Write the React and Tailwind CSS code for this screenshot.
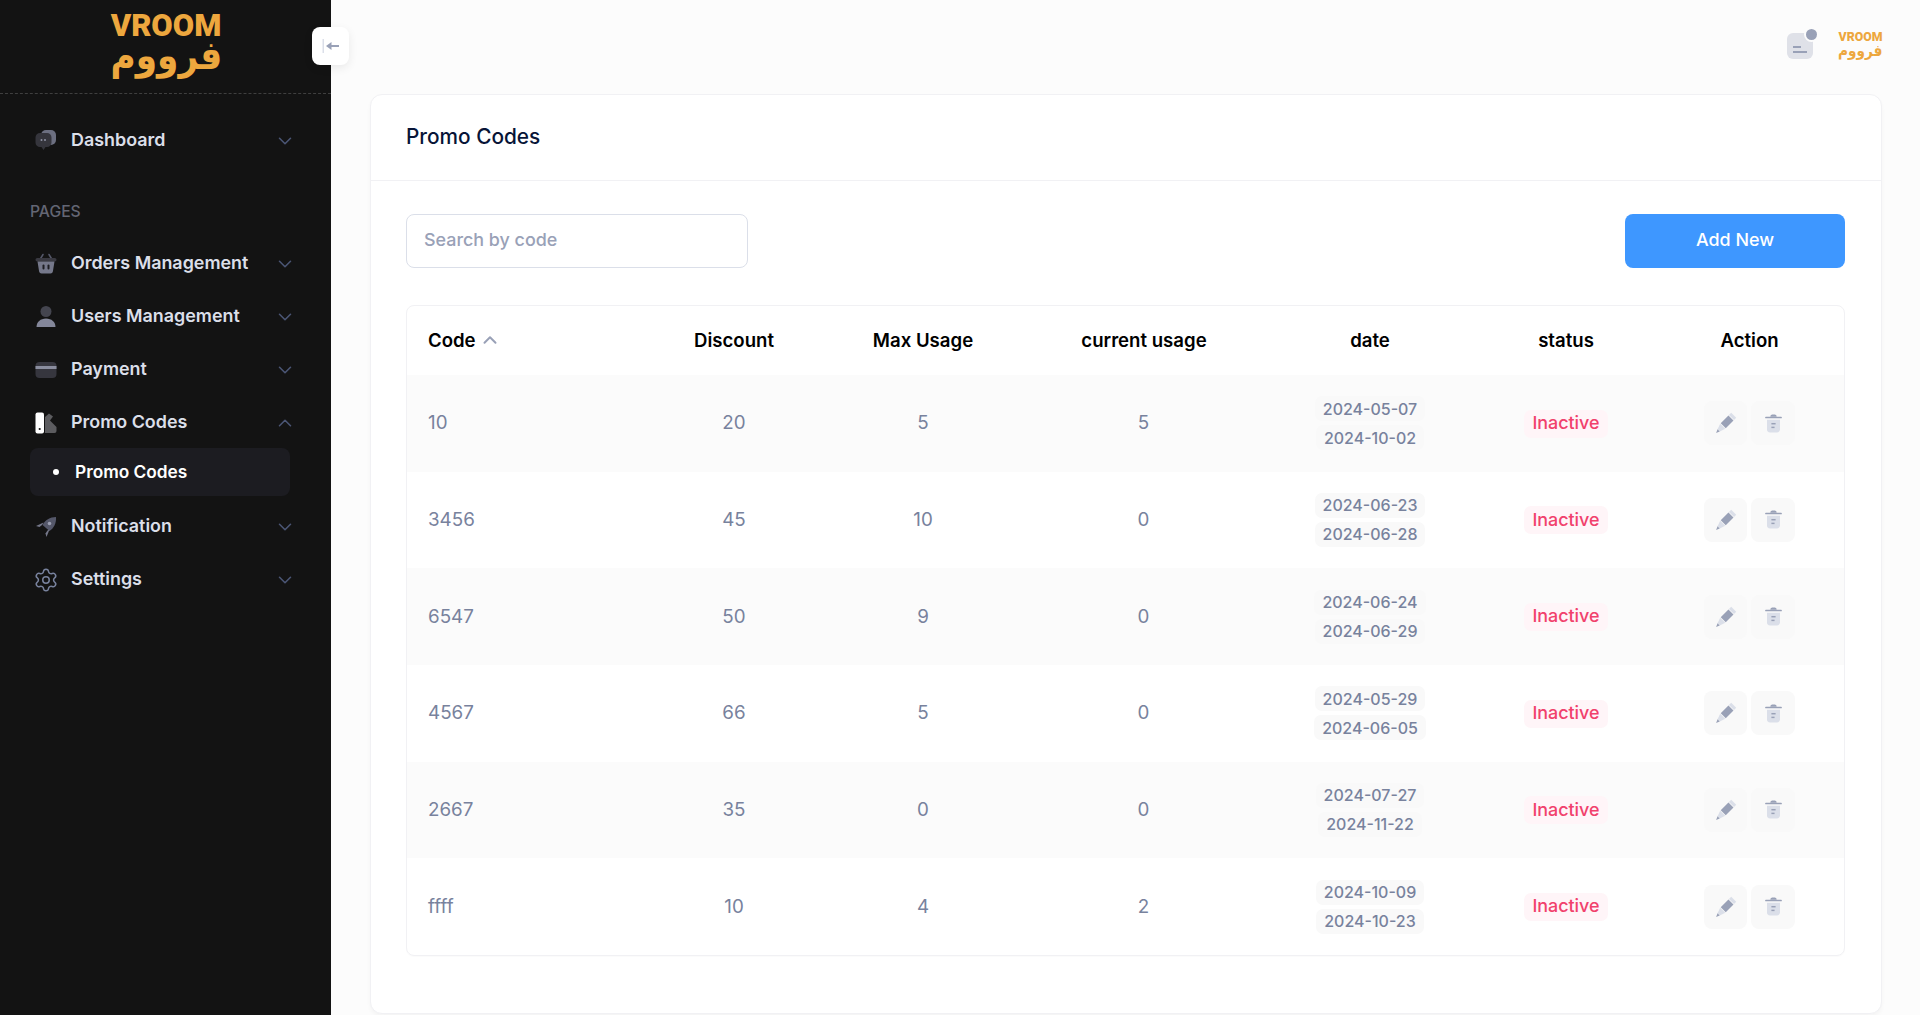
import { ChevronDown, ChevronUp, Settings } from 'lucide-react';

const rows = [
  { code: '10', discount: 20, max: 5, current: 5, from: '2024-05-07', to: '2024-10-02' },
  { code: '3456', discount: 45, max: 10, current: 0, from: '2024-06-23', to: '2024-06-28' },
  { code: '6547', discount: 50, max: 9, current: 0, from: '2024-06-24', to: '2024-06-29' },
  { code: '4567', discount: 66, max: 5, current: 0, from: '2024-05-29', to: '2024-06-05' },
  { code: '2667', discount: 35, max: 0, current: 0, from: '2024-07-27', to: '2024-11-22' },
  { code: 'ffff', discount: 10, max: 4, current: 2, from: '2024-10-09', to: '2024-10-23' },
];

function ChatIcon() {
  return (
    <svg viewBox="0 0 22 22" className="w-[22px] h-[22px]">
      <rect x="6" y="0" width="15" height="15" rx="5" fill="#6c6f80" />
      <path d="M5 3h7a4.500 4.500 0 0 1 4.500 4.500v5A4.500 4.500 0 0 1 12 17H10.500L8.500 20 6.500 17H5A4.500 4.500 0 0 1 .5 12.500v-5A4.500 4.500 0 0 1 5 3z" fill="#35353c" />
      <circle cx="6.500" cy="10" r="1" fill="#8f92a3" />
      <circle cx="10" cy="10" r="1" fill="#8f92a3" />
    </svg>
  );
}

function BasketIcon() {
  return (
    <svg viewBox="0 0 22 22" className="w-[22px] h-[22px]">
      <path d="M5 6.500 8 1.500M17 6.500 14 1.500" stroke="#55586a" strokeWidth="1.500" strokeLinecap="round" />
      <rect x="0.500" y="5" width="21" height="3.500" rx="1.750" fill="#3a3a42" />
      <path d="M2.500 8.500h17l-1.600 10a2.500 2.500 0 0 1-2.500 2H6.600a2.500 2.500 0 0 1-2.500-2z" fill="#75788a" />
      <rect x="7.500" y="11.500" width="2" height="5" rx="1" fill="#1d1d22" />
      <rect x="12.500" y="11.500" width="2" height="5" rx="1" fill="#1d1d22" />
    </svg>
  );
}

function UserIcon() {
  return (
    <svg viewBox="0 0 22 22" className="w-[22px] h-[22px]">
      <circle cx="11" cy="5.500" r="5.500" fill="#44454f" />
      <path d="M1.500 21c0-5 4-8.500 9.500-8.500s9.500 3.500 9.500 8.500z" fill="#84879a" />
    </svg>
  );
}

function CardIcon() {
  return (
    <svg viewBox="0 0 22 22" className="w-[22px] h-[22px]">
      <rect x="0.500" y="3" width="21" height="16" rx="4" fill="#36363e" />
      <rect x="0.500" y="7" width="21" height="3" fill="#8a8d9e" />
    </svg>
  );
}

function PromoIcon() {
  return (
    <svg viewBox="0 0 22 22" className="w-[22px] h-[22px]">
      <path d="M10 5 14 1.500l4 3-3 4L21.500 15v4a2 2 0 0 1-2 2H10z" fill="#5c5c5f" />
      <rect x="0.500" y="0.500" width="8.500" height="21" rx="2" fill="#ffffff" />
      <circle cx="4.700" cy="17" r="1.100" fill="#131313" />
    </svg>
  );
}

function RocketIcon() {
  return (
    <svg viewBox="0 0 22 22" className="w-[22px] h-[22px]">
      <path d="M21 1c.5 6-2 11-6.500 14L7.500 9C10 4 15 1 21 1z" fill="#55586a" />
      <circle cx="14.500" cy="7.500" r="1.800" fill="#9a9db0" />
      <path d="M8.500 6.500 1 10l3.500 1L7 9z" fill="#75788a" />
      <path d="M14.500 13.500 11.500 21l-1-3.500 2-3z" fill="#75788a" />
    </svg>
  );
}

function NavItem({ icon, label, open }) {
  return (
    <div className="h-[53px] flex items-center pl-[5px] cursor-pointer">
      <span className="w-[22px] h-[22px] flex items-center justify-center mr-[14px]">{icon}</span>
      <span className="flex-1 text-[17.900px] font-semibold text-[#dbdfe9]">{label}</span>
      {open
        ? <ChevronUp className="w-[22px] h-[22px] text-[#4b5675] mr-[-6px]" strokeWidth={1.700} />
        : <ChevronDown className="w-[22px] h-[22px] text-[#4b5675] mr-[-6px]" strokeWidth={1.700} />}
    </div>
  );
}

function Sidebar() {
  return (
    <aside className="relative w-[331px] shrink-0 bg-[#131313] h-screen">
      <div className="h-[94px] border-b border-dashed border-[#3f3f3f] flex flex-col items-center pl-[1px] pt-[12px]">
        <div className="text-[#eda73e] text-[31px] leading-[28px] font-black font-['Roboto',sans-serif]">VROOM</div>
        <div className="text-[#eda73e] text-[39px] leading-[32px] scale-x-[0.88] font-bold font-['DejaVu_Sans',sans-serif]">فرووم</div>
      </div>

      <button className="absolute left-[312px] top-[27px] w-[37px] h-[38px] bg-white rounded-lg shadow-[0_3px_10px_rgba(0,0,0,0.08)] flex items-center justify-center">
        <svg viewBox="0 0 18 16" className="w-[18px] h-[16px]">
          <rect x="0.500" y="1" width="1.500" height="14" fill="#dbdfe9" />
          <path d="M6 8h11" stroke="#99a1b7" strokeWidth="2" />
          <path d="M4 8 9.500 4v8z" fill="#99a1b7" />
        </svg>
      </button>

      <nav className="pl-[30px] pr-[41px] pt-[20px]">
        <NavItem icon={<ChatIcon />} label="Dashboard" />
        <div className="mt-[33px] mb-[13px] h-[24px] leading-[24px] text-[15.700px] font-medium text-[#636674]">PAGES</div>
        <NavItem icon={<BasketIcon />} label="Orders Management" />
        <NavItem icon={<UserIcon />} label="Users Management" />
        <NavItem icon={<CardIcon />} label="Payment" />
        <NavItem icon={<PromoIcon />} label="Promo Codes" open />
        <div className="h-[48px] -mt-[1px] mb-[4px] flex items-center bg-[#1c1c21] rounded-lg pl-[23px]">
          <span className="w-[6px] h-[6px] rounded-full bg-white mr-[16px]" />
          <span className="text-[17.300px] font-semibold text-white">Promo Codes</span>
        </div>
        <NavItem icon={<RocketIcon />} label="Notification" />
        <NavItem icon={<Settings className="w-[26px] h-[26px] text-[#78829d] shrink-0" strokeWidth={1.400} />} label="Settings" />
      </nav>
    </aside>
  );
}

function Topbar() {
  return (
    <header className="h-[94px] shrink-0 flex justify-end items-start pr-[37px] pt-[31px]">
      <div className="relative w-[26px] h-[26px] mt-[2px] mr-[25px] rounded-md bg-[#dfe1e8] flex flex-col justify-end gap-[3px] pl-[6px] pb-[6px]">
        <span className="w-[8px] h-[2px] bg-[#99a1b7]" />
        <span className="w-[14px] h-[2px] bg-[#99a1b7]" />
        <span className="absolute -top-[4px] -right-[4px] w-[11px] h-[11px] rounded-full bg-[#99a1b7] ring-2 ring-[#fcfcfc]" />
      </div>
      <div className="w-[45px] flex flex-col items-center text-[#eda73e]">
        <div className="text-[12.300px] leading-[13px] font-black font-['Roboto',sans-serif]">VROOM</div>
        <div className="text-[15.500px] leading-[13px] mt-[1px] scale-x-[0.88] font-bold font-['DejaVu_Sans',sans-serif]">فرووم</div>
      </div>
    </header>
  );
}

function PencilIcon() {
  return (
    <svg viewBox="0 0 20 20" className="w-[22px] h-[22px]">
      <path d="M12.700 2.700 14.700 .7 19.300 5.300 17.300 7.300z" fill="#dbdfe9" />
      <path d="M5.200 10.200 12.200 3.200 16.800 7.800 9.800 14.800z" fill="#99a1b7" />
      <path d="M4.700 10.700 9.300 15.300 4.300 17.700 2.300 15.700z" fill="#dbdfe9" />
      <path d="M2.300 15.700 4.300 17.700 1 19z" fill="#99a1b7" />
    </svg>
  );
}

function TrashIcon() {
  return (
    <svg viewBox="0 0 20 20" className="w-[21px] h-[21px]">
      <path d="M7 3.500C7 2 8 1.500 10 1.500s3 .5 3 2z" fill="#99a1b7" />
      <rect x="2" y="3.500" width="16" height="1.600" rx="0.800" fill="#99a1b7" />
      <path d="M3.800 6.500h12.400v9a3 3 0 0 1-3 3H6.800a3 3 0 0 1-3-3z" fill="#dbdfe9" />
      <rect x="8" y="9.500" width="4" height="1.400" fill="#99a1b7" />
      <rect x="8" y="13" width="3" height="1.400" fill="#99a1b7" />
    </svg>
  );
}

function Pill({ children }) {
  return (
    <span className="inline-flex h-[25px] items-center px-[8px] rounded-[7px] bg-[#f9f9f9] text-[16px] font-medium text-[#78829d]">
      {children}
    </span>
  );
}

function PromoTable() {
  return (
    <div className="mt-[37px] border border-[#f1f1f4] rounded-lg overflow-hidden shadow-[0_1px_1px_rgba(0,0,0,0.02)]">
      <table className="w-full table-fixed text-[18.800px] text-[#78829d]">
        <colgroup>
          <col className="w-[241px]" />
          <col className="w-[172px]" />
          <col className="w-[206px]" />
          <col className="w-[236px]" />
          <col className="w-[216px]" />
          <col className="w-[176px]" />
          <col className="w-[192px]" />
        </colgroup>
        <thead>
          <tr className="h-[69px] text-black text-[18.600px]">
            <th className="text-left font-semibold pl-[21px]">
              <span className="inline-flex items-center">
                Code
                <ChevronUp className="w-[22px] h-[22px] ml-[3px] text-[#99a1b7]" strokeWidth={2.200} />
              </span>
            </th>
            <th className="font-semibold">Discount</th>
            <th className="font-semibold">Max Usage</th>
            <th className="font-semibold">current usage</th>
            <th className="font-semibold">date</th>
            <th className="font-semibold">status</th>
            <th className="font-semibold pr-[1px]">Action</th>
          </tr>
        </thead>
        <tbody>
          {rows.map((row) => (
            <tr key={row.code} className="h-[96.670px] odd:bg-[#fbfbfb] text-center">
              <td className="text-left pl-[21px]">{row.code}</td>
              <td>{row.discount}</td>
              <td>{row.max}</td>
              <td className="pr-[1px]">{row.current}</td>
              <td>
                <div className="flex flex-col items-center gap-[4px]">
                  <Pill>{row.from}</Pill>
                  <Pill>{row.to}</Pill>
                </div>
              </td>
              <td>
                <span className="inline-flex h-[28px] items-center px-[8px] rounded-[7px] bg-[#fff5f8] text-[#f1416c] text-[17.900px] font-medium">
                  Inactive
                </span>
              </td>
              <td className="pl-[50px]">
                <div className="flex gap-[4px]">
                  <button className="w-[43px] h-[44px] rounded-lg bg-[#f9f9f9] flex items-center justify-center"><PencilIcon /></button>
                  <button className="w-[44px] h-[44px] rounded-lg bg-[#f9f9f9] flex items-center justify-center"><TrashIcon /></button>
                </div>
              </td>
            </tr>
          ))}
        </tbody>
      </table>
    </div>
  );
}

export default function App() {
  return (
    <div className="flex h-screen overflow-hidden bg-[#fcfcfc] font-['Inter',sans-serif]">
      <Sidebar />
      <main className="flex-1 flex flex-col min-w-0">
        <Topbar />
        <section className="ml-[39px] mr-[38px] h-[920px] bg-white border border-[#f1f1f4] rounded-xl shadow-[0_3px_4px_rgba(0,0,0,0.03)]">
          <div className="h-[86px] pl-[35px] pr-[36px] pb-[2px] flex items-center border-b border-[#f1f1f4]">
            <h1 className="text-[20.800px] font-medium text-[#071437]">Promo Codes</h1>
          </div>
          <div className="pl-[35px] pr-[36px] pt-[33px]">
            <div className="flex justify-between items-start">
              <input
                placeholder="Search by code"
                className="w-[342px] h-[54px] px-[17px] pb-[4px] border border-[#dbdfe9] rounded-lg text-[17.900px] font-medium bg-white outline-none placeholder:text-[#99a1b7]"
              />
              <button className="w-[220px] h-[54px] pb-[2px] rounded-lg bg-[#3e97ff] text-white text-[17.900px] font-medium">Add New</button>
            </div>
            <PromoTable />
          </div>
        </section>
      </main>
    </div>
  );
}
